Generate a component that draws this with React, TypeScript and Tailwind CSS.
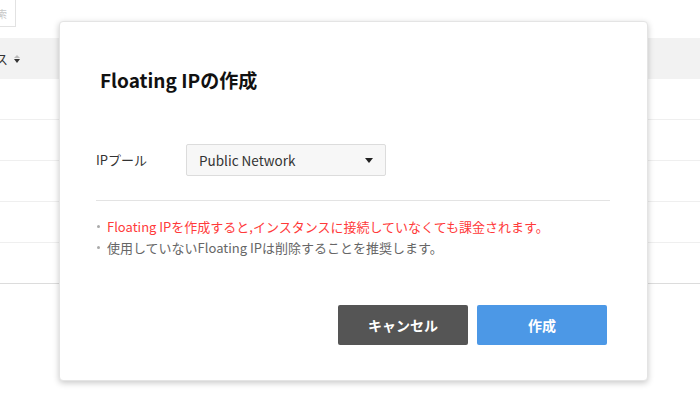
import React from "react";

const rows = [0, 1, 2, 3, 4];

const App = () => {
  return (
    <div
      className="relative w-[700px] h-[400px] overflow-hidden bg-white text-[#333]"
      style={{ fontFamily: '"Noto Sans CJK JP", "Noto Sans", sans-serif' }}
    >
      {/* background list page */}
      <div className="flex flex-col">
        <div className="h-[38px] flex items-start">
          <button className="w-[16px] h-[27px] border border-[#e2e2e2] border-l-0 border-t-0 bg-white overflow-hidden flex items-center justify-end pr-[8px] text-[10px] text-[#c8c8c8] whitespace-nowrap">
            検索
          </button>
        </div>
        <div className="h-[41px] bg-[#f2f2f2] flex items-center text-[13px] text-[#333]">
          <span className="-ml-[5px]">ス</span>
          <span className="ml-[6px] flex flex-col items-center gap-[1px]">
            <span className="block w-0 h-0 border-l-[3px] border-r-[3px] border-b-[3px] border-l-transparent border-r-transparent border-b-[#bbb]" />
            <span className="block w-0 h-0 border-l-[3px] border-r-[3px] border-t-[4px] border-l-transparent border-r-transparent border-t-[#333]" />
          </span>
        </div>
        {rows.map((r) => (
          <div
            key={r}
            className={
              r === 4
                ? "h-[41px] border-b border-[#dcdcdc]"
                : "h-[41px] border-b border-[#efefef]"
            }
          />
        ))}
      </div>

      {/* modal */}
      <div className="absolute left-[59px] top-[21px] w-[589px] h-[360px] bg-white rounded-[4px] border border-[#e4e4e4] shadow-[0_2px_6px_rgba(0,0,0,0.22)] pt-[45px] pl-[36px] pr-[37px] flex flex-col">
        <h2 className="ml-[4px] text-[19px] leading-[26px] font-bold text-[#111]">
          Floating IPの作成
        </h2>

        <div className="mt-[51px] flex items-center">
          <span className="w-[90px] text-[13px] text-[#333]">IPプール</span>
          <div className="w-[200px] h-[32px] bg-[#f7f7f7] border border-[#dcdcdc] rounded-[2px] flex items-center justify-between pl-[12px] pr-[12px]">
            <span className="text-[13.5px] text-[#333]">Public Network</span>
            <span className="block w-0 h-0 border-l-[4px] border-r-[4px] border-t-[5px] border-l-transparent border-r-transparent border-t-[#222]" />
          </div>
        </div>

        <div className="mt-[24px] border-t border-[#e3e3e3]" />

        <ul className="mt-[15px] flex flex-col text-[13px] leading-[21px]">
          <li className="flex items-center">
            <span className="w-[3px] h-[3px] rounded-full bg-[#aaa] mr-[7px] ml-[1px]" />
            <span className="text-[#ff3a3a]">
              Floating IPを作成すると,インスタンスに接続していなくても課金されます。
            </span>
          </li>
          <li className="flex items-center">
            <span className="w-[3px] h-[3px] rounded-full bg-[#aaa] mr-[7px] ml-[1px]" />
            <span className="text-[#666]">
              使用していないFloating IPは削除することを推奨します。
            </span>
          </li>
        </ul>

        <div className="mt-[47px] flex justify-end gap-[9px] pr-[3px]">
          <button className="w-[130px] h-[40px] rounded-[2px] bg-[#555555] text-white text-[14px] font-bold">
            キャンセル
          </button>
          <button className="w-[130px] h-[40px] rounded-[2px] bg-[#4c98e6] text-white text-[14px] font-bold">
            作成
          </button>
        </div>
      </div>
    </div>
  );
};

export default App;
